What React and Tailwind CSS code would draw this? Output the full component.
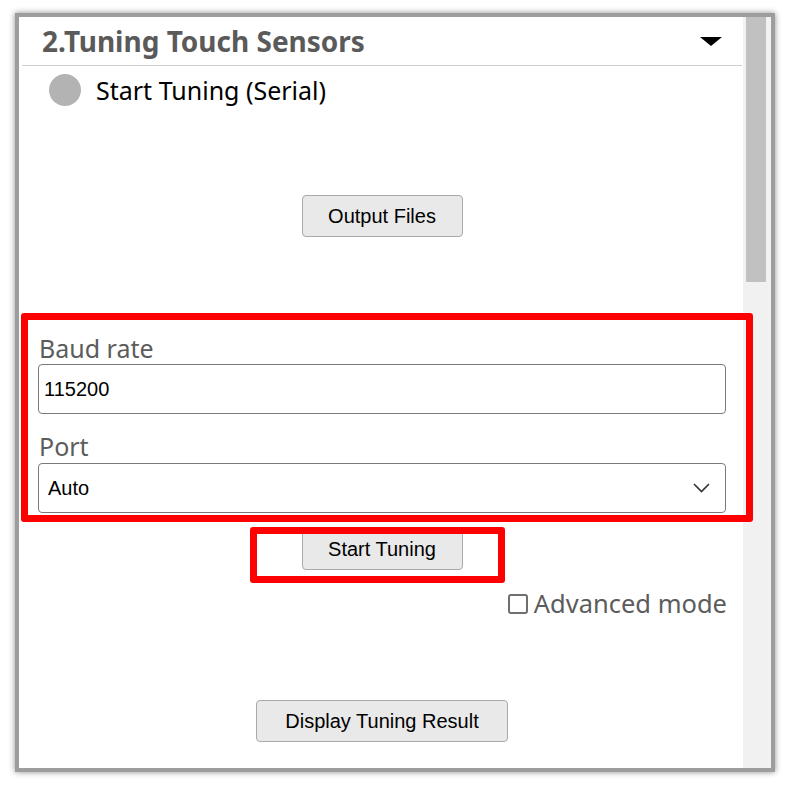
import React from 'react';

function GrayButton({ children, className = '' }) {
  return (
    <button
      className={`h-[42px] rounded-[4px] border border-[#a9a9a9] bg-[#e9e9e9] text-[20px] leading-none text-black font-['Liberation_Sans',Arial,sans-serif] ${className}`}
    >
      {children}
    </button>
  );
}

export default function App() {
  return (
    <div className="w-[789px] h-[786px] bg-white pt-[13px] pl-[15px]">
      {/* screenshot frame */}
      <div className="relative flex w-[760px] h-[759px] border-4 border-[#9d9d9d] bg-white shadow-[0_0_6px_rgba(0,0,0,0.45)]">
        {/* panel content */}
        <div className="flex w-[724px] flex-col font-['Noto_Sans','Open_Sans',sans-serif]">
          {/* section header */}
          <div className="ml-[3px] mr-[1px] flex h-[49px] items-center justify-between border-b border-[#cfcfcf] pl-[20px] pr-[20px]">
            <h2 className="text-[28px] font-bold leading-none text-[#5a5a5a]">2.Tuning Touch Sensors</h2>
            <svg width="22" height="9" viewBox="0 0 22 9">
              <path d="M0 0 H22 L11 9 Z" fill="#000" />
            </svg>
          </div>

          {/* status row */}
          <div className="mt-[8px] flex items-center gap-[15px] pl-[30px]">
            <span className="h-[32px] w-[32px] rounded-full bg-[#b3b3b3]" />
            <span className="text-[25px] leading-[32px] text-black">Start Tuning (Serial)</span>
          </div>

          <div className="mt-[89px] flex justify-center pl-[2px]">
            <GrayButton className="w-[161px] h-[41px]">Output Files</GrayButton>
          </div>

          {/* serial settings */}
          <div className="mt-[97px] pl-[19px] pr-[17px]">
            <label className="block pb-[2px] pl-[1px] text-[25px] leading-[28px] text-[#5c5c5c]">Baud rate</label>
            <div className="flex h-[50px] items-center rounded-[4px] border border-[#7a7a7a] pl-[5px] font-['Liberation_Sans',Arial,sans-serif] text-[20px] text-black">
              115200
            </div>
            <label className="mt-[18px] block pb-[2px] pl-[1px] text-[25px] leading-[28px] text-[#5c5c5c]">Port</label>
            <div className="mt-[1px] flex h-[50px] items-center justify-between rounded-[4px] border border-[#7a7a7a] pl-[9px] pr-[15px] font-['Liberation_Sans',Arial,sans-serif] text-[20px] text-black">
              <span>Auto</span>
              <svg width="17" height="10" viewBox="0 0 17 10">
                <path d="M1 1 L8.5 8.5 L16 1" fill="none" stroke="#333" strokeWidth="1.6" />
              </svg>
            </div>
          </div>

          <div className="mt-[15px] flex justify-center pl-[2px]">
            <GrayButton className="w-[161px]">Start Tuning</GrayButton>
          </div>

          <div className="mt-[19px] flex items-center justify-end gap-[6px] pr-[16px]">
            <span className="h-[20px] w-[20px] rounded-[3px] border-2 border-[#6f6f6f] bg-white" />
            <span className="pb-[2px] text-[25.5px] leading-[28px] text-[#5c5c5c]">Advanced mode</span>
          </div>

          <div className="mt-[81px] flex justify-center pl-[2px]">
            <GrayButton className="w-[252px]">Display Tuning Result</GrayButton>
          </div>
        </div>

        {/* scrollbar */}
        <div className="w-[28px] bg-[#f1f1f1] pl-[3px]">
          <div className="h-[265px] w-[20px] bg-[#c1c1c1]" />
        </div>

        {/* red annotation boxes */}
        <div className="pointer-events-none absolute left-[2px] top-[296px] h-[209px] w-[732px] rounded-[3px] border-[7px] border-[#ff0000]" />
        <div className="pointer-events-none absolute left-[231px] top-[510px] h-[56px] w-[255px] rounded-[3px] border-[7px] border-[#ff0000]" />
      </div>
    </div>
  );
}
